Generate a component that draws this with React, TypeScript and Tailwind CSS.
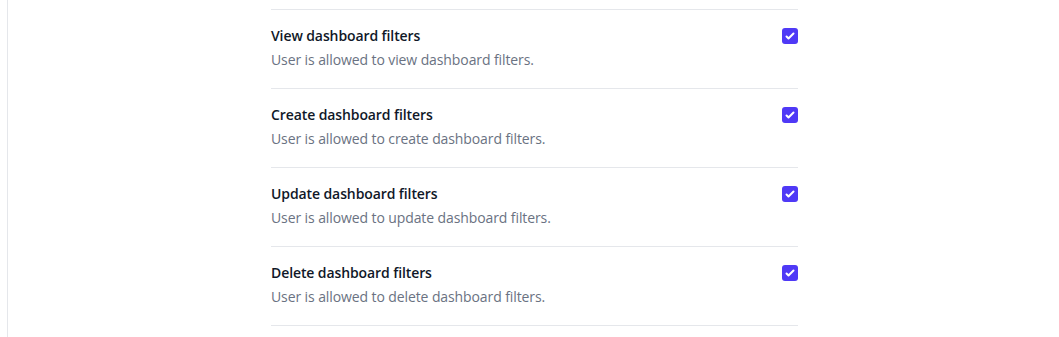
import React from 'react';

interface PermissionRowProps {
  title: string;
  description: string;
  checked: boolean;
}

const permissions: PermissionRowProps[] = [
  { title: 'View dashboard filters', description: 'User is allowed to view dashboard filters.', checked: true },
  { title: 'Create dashboard filters', description: 'User is allowed to create dashboard filters.', checked: true },
  { title: 'Update dashboard filters', description: 'User is allowed to update dashboard filters.', checked: true },
  { title: 'Delete dashboard filters', description: 'User is allowed to delete dashboard filters.', checked: true },
];

const PermissionRow: React.FC<PermissionRowProps> = ({ title, description, checked }) => {
  return (
    <div className="flex items-start justify-between border-t border-gray-200 pt-4 pb-[18px]">
      <div className="tracking-[-0.1px]">
        <div className="text-sm leading-5 font-semibold text-gray-900">{title}</div>
        <div className="mt-1 text-sm leading-5 text-gray-500">{description}</div>
      </div>
      <div className="pt-[2px]">
        <div
          className={`flex h-4 w-4 items-center justify-center rounded-[3px] ${
            checked ? 'bg-indigo-600' : 'border border-gray-300 bg-white'
          }`}
        >
          {checked && (
            <svg viewBox="0 0 16 16" className="h-4 w-4" fill="white">
              <path d="M12.207 4.793a1 1 0 010 1.414l-5 5a1 1 0 01-1.414 0l-2-2a1 1 0 011.414-1.414L6.5 9.086l4.293-4.293a1 1 0 011.414 0z" />
            </svg>
          )}
        </div>
      </div>
    </div>
  );
};

export default function App() {
  return (
    <div className="flex h-[337px] bg-white" style={{ fontFamily: '"Open Sans", sans-serif' }}>
      <div className="w-[8px] shrink-0 border-r border-gray-200" />
      <div className="flex-1 pl-[2px]">
        <div className="mx-auto w-[527px] pt-[9px]">
          {permissions.map((p) => (
            <PermissionRow key={p.title} {...p} />
          ))}
          <div className="border-t border-gray-200" />
        </div>
      </div>
    </div>
  );
}
